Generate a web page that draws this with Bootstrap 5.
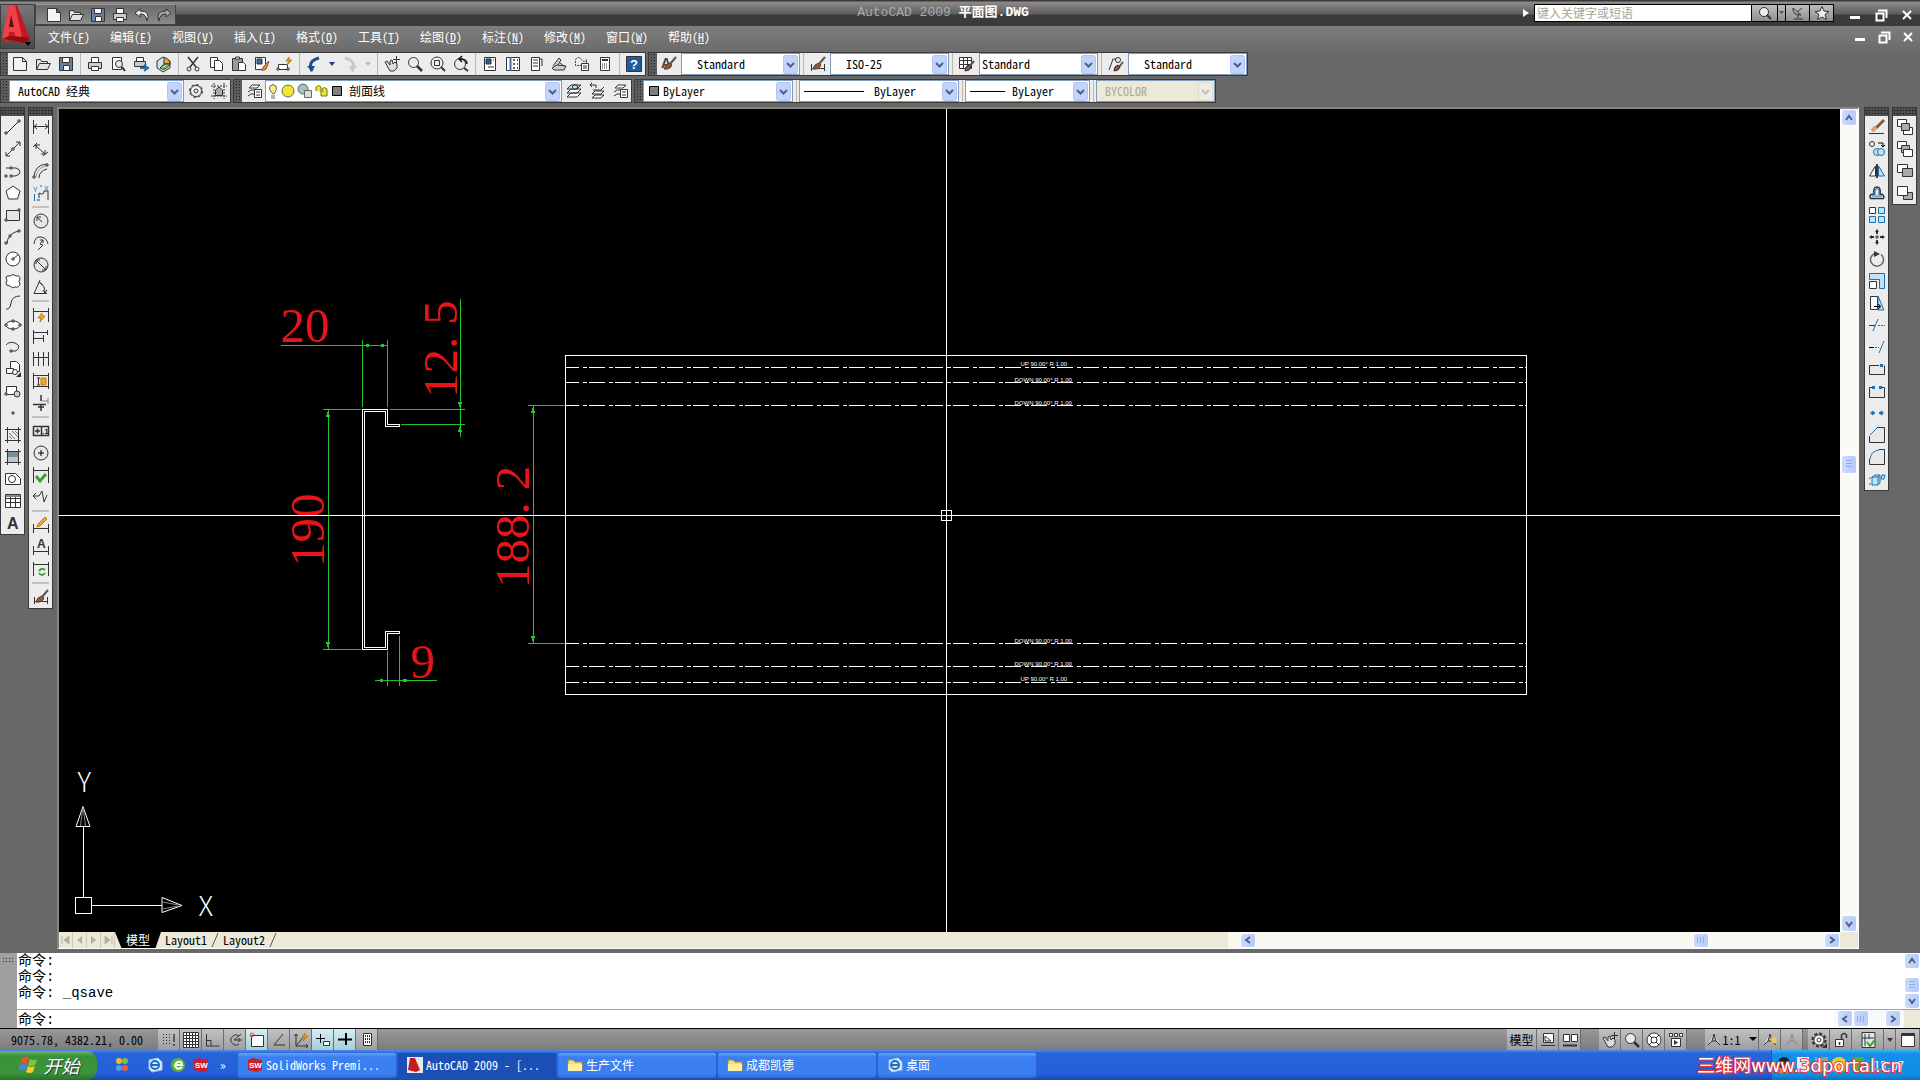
<!DOCTYPE html>
<html lang="zh-CN">
<head>
<meta charset="utf-8">
<meta name="viewport" content="width=device-width, initial-scale=1">
<title>AutoCAD 2009 平面图.DWG</title>
<link href="https://cdn.jsdelivr.net/npm/bootstrap@5.3.0/dist/css/bootstrap.min.css" rel="stylesheet">
<style>
body{background:#686868;color:#000;font:12px/16px "Noto Sans CJK SC","Noto Sans",sans-serif;font-feature-settings:"hwid";min-height:100vh;overflow:hidden}
button,select,input{font:inherit;font-feature-settings:inherit;color:inherit;border:0;background:none;padding:0;margin:0;border-radius:0}
svg{display:block;flex:none}
.ico{width:16px;height:16px;fill:none;stroke:#333;overflow:visible}
a{color:inherit;text-decoration:none}
.head{position:relative}
.titlebar{height:26px;background:linear-gradient(#3c3838 0,#3c3838 1px,#8d8a8a 2px,#5e5e5e 14px,#3b3b3b 15px,#3b3b3b 100%)}
.logo{left:0;top:4px;width:35px;height:45px;background:linear-gradient(#777,#4a4a4a);border:1px solid #3e3e3e;z-index:2}
.quick{margin-left:35px;height:21px;margin-top:4px;padding-left:7px;border:1px solid #444;border-top-color:#999;background:linear-gradient(#6b6b6b,#8b8b8b)}
.quick button,.tool{height:22px;display:flex;align-items:center;justify-content:center}
.quick button{width:22px;height:19px}
.doc{font:13px/18px "Liberation Mono","Noto Sans CJK SC",monospace;color:#aaa;padding-left:188px}
.doc b{color:#fff}
.seek{height:18px;border:1px solid #000;background:#000;gap:1px;margin-top:4px}
.seek input{width:216px;background:#fff;padding-left:2px;font-size:12px}
.seek input::placeholder{color:#a9a595;opacity:1}
.seek button{background:linear-gradient(#bdbdbd,#8f8f8f);display:flex;align-items:center;justify-content:center}
.winbtn{width:26px;height:22px;display:flex;align-items:center;justify-content:center}
.menubar .winbtn{width:24px}
.menubar{height:26px;background:linear-gradient(#7e7e7e,#6a6a6a);color:#fff}
.menubar a{width:62px;padding-top:3px}
.bars{padding-bottom:1px}
.bar{height:24px;border:1px solid #3a3a3a;background:#ececec;display:flex;align-items:center}
.bar+.bar{margin-left:2px}
.grip{width:8px;align-self:stretch;background:#5c5c5c radial-gradient(circle,#222 1px,transparent 1px) 1px 0/3px 3px}
.bar .tool{width:23px}
.bar .drop{width:13px}
.split{width:6px;align-self:stretch;display:flex;justify-content:center}
.split::before{content:"";width:1px;background:#bdb9ab}
.combo{height:22px;background:#fff;border:1px solid #7f9db9;display:flex;align-items:center;gap:1px}
.combo select{flex:1;min-width:0;height:20px;appearance:none;background:url("data:image/svg+xml,%3Csvg xmlns='http://www.w3.org/2000/svg' width='16' height='19'%3E%3Crect x='.5' y='.5' width='14' height='18' rx='2' fill='%23c3d3fc' stroke='%23b0c4f5'/%3E%3Cpath d='M4 8l3.500 3.500L11 8' fill='none' stroke='%234d6185' stroke-width='2'/%3E%3C/svg%3E") right 0 center no-repeat}
.combo.off{background:#ece9d8;color:#aca899}
.combo.off select{opacity:1;color:#aca899;background-image:url("data:image/svg+xml,%3Csvg xmlns='http://www.w3.org/2000/svg' width='16' height='19'%3E%3Crect x='.5' y='.5' width='14' height='18' rx='2' fill='%23efede2' stroke='%23dedbca'/%3E%3Cpath d='M4 8l3.500 3.500L11 8' fill='none' stroke='%23c5c1b0' stroke-width='2'/%3E%3C/svg%3E")}
.sty{width:119px}
.palette{width:25px;background:#ececec;border:1px solid #3a3a3a;margin-top:3px}
.palette .tool{width:23px}
.phead{height:8px;background:#4c4c4c radial-gradient(circle,#111 1px,transparent 1px) 3px 1px/3px 3px}
.psplit{height:6px;padding-top:2px}
.psplit::before{content:"";display:block;height:2px;margin:0 3px;background:#c2c2c2}
.board{border:2px solid #88857a;border-right-color:#fff;border-bottom-color:#fff;border-width:2px 1px 1px 2px;margin:3px 0 4px 4px}
.field{background:#000}
.field svg{width:100%;height:100%;position:absolute;inset:0}
.vs{width:18px;background:#fbfaf5}
.hs{height:16px;background:#f8f7f0;width:34%}
.sb{width:16px;height:17px;border:1px solid #fff;border-radius:3px;background:linear-gradient(90deg,#cbdafd,#b7cbf8);display:flex;align-items:center;justify-content:center;flex:none}
.tabs{height:16px;background:#ece9d8}
.tabs>button.pg{width:14px;height:16px;border-right:1px solid #cdc9b8;display:flex;align-items:center;justify-content:center}
.mtab{width:46px;background:#000;color:#fff;text-align:center;clip-path:polygon(0 0,100% 0,88% 100%,14% 100%)}
.ltab{width:58px;padding-left:4px;display:flex;justify-content:space-between}
.cmd{font:14px/16px "Liberation Mono","Noto Sans CJK SC",monospace;background:#fff}
.cgrip{width:17px;background:#9f9f9f;padding:4px 2px}
.cgrip i{display:block;height:5px;background:radial-gradient(circle,#222 1px,transparent 1px) 0 0/3px 3px}
.log{height:56px;overflow:hidden;padding-left:1px}
.ask{height:19px;border-top:1px solid #a5a293}
.ask label{padding:2px 0 0 1px}
.status{height:22px;border-top:1px solid #000;background:linear-gradient(#989898,#7c7c7c)}
.status .tool{width:22px;height:21px;background:linear-gradient(#c2c2c2,#9d9d9d);border-right:1px solid #6d6d6d}
.status .tool.on{background:linear-gradient(#d9edf3,#a4cdda)}
.task{height:30px;background:linear-gradient(#4b8ee8 0,#2a64d8 3px,#245edb 24px,#1c49ad 30px);color:#fff}
.start{width:97px;height:29px;border-radius:0 10px 10px 0;background:linear-gradient(#6cb665,#3c9038 5px,#3a963a 22px,#2b6f2a);font:italic 18px/24px "Noto Sans CJK SC",sans-serif;text-shadow:1px 1px 1px #234}
.tk{width:158px;height:25px;border-radius:2px;background:linear-gradient(#6aa2f8,#3b7ff2 4px,#3a7ff0 21px,#2f6bd8);display:flex;align-items:center;gap:3px;padding:0 9px}
.tk.on{background:#1c4fb5}
.ql{width:23px;display:flex;justify-content:center}
.tray{width:149px;background:linear-gradient(#38b4f5,#1290e8 4px,#108de5 25px,#0c70c0);border-left:1px solid #0f5fb5}
.mark3d{right:18px;top:5px;font:18px/22px "DejaVu Sans","Noto Sans CJK SC",sans-serif;color:#fff;white-space:nowrap;-webkit-text-stroke:2px #e2343a;paint-order:stroke fill}
</style>
</head>
<body class="d-flex flex-column">
<header class="head">
  <button class="logo position-absolute" aria-label="AutoCAD"><svg width="33" height="43" viewBox="0 0 33 43"><path d="M8 0H16L29 34 23 38 2 36Z" fill="#c31a22"/><path d="M8 0H14L22 37 16 36 13 27H8L7 36 1 34Z" fill="#ee4148"/><path d="M10 10L13 22H8Z" fill="#5d1417"/><path d="M1 34L16 36 23 38 29 34 24 32 8 31Z" fill="#8b0e14"/><path d="M24 37h6l-3 4z" fill="#000"/></svg></button>
  <div class="titlebar d-flex align-items-start">
    <div class="quick d-flex" id="quick"></div>
    <div class="doc flex-grow-1 text-center pt-1">AutoCAD 2009 <b>平面图.DWG</b></div>
    <svg class="mt-2" width="12" height="10"><path d="M1 1l6 4-6 4z" fill="#fff"/></svg>
    <div class="seek d-flex"><input type="text" aria-label="搜索" placeholder="键入关键字或短语"><button style="width:25px" aria-label="搜索"><svg class="ico"><circle cx="7" cy="7" r="4.500" fill="#eee"/><path d="M10 10l4 4" stroke-width="2"/></svg></button><button style="width:7px" aria-label="更多"><svg width="5" height="4"><path d="M0 0h5L2.500 3z" fill="#555"/></svg></button><button style="width:23px" aria-label="通讯中心"><svg class="ico"><path d="M3 3Q2 10 11 10ZM7 7l5-4M8 10v3M4 14h9"/></svg></button><button style="width:23px" aria-label="收藏夹"><svg class="ico"><path d="M8 1.500l2 4.500 5 .5-4 3 1.500 5L8 12l-4.500 2.500L5 9.500l-4-3 5-.5z" fill="#eee"/></svg></button></div>
    <div class="d-flex ps-2 pt-1 pe-0 wins"></div>
  </div>
  <div class="menubar d-flex">
    <nav class="d-flex flex-grow-1 ps-5" id="menu"></nav>
    <div class="d-flex wins"></div>
  </div>
</header>

<div class="bars d-flex flex-column gap-1" id="bars">
  <div class="d-flex">
    <div class="bar" style="width:646px"><span class="grip"></span><div class="d-flex" data-set="std"></div></div>
    <div class="bar" id="styles"><span class="grip"></span></div>
  </div>
  <div class="d-flex" style="margin-top:-1px">
    <div class="bar"><span class="grip"></span><div class="combo" style="width:175px"><select class="ps-2" aria-label="工作空间"><option>AutoCAD 经典</option></select></div><div class="d-flex" data-set="ws"></div></div>
    <div class="bar"><span class="grip"></span><div class="d-flex" data-set="lay1"></div>
      <div class="combo" style="width:297px"><svg width="82" height="18" fill="none" stroke="#666"><path d="M7 12Q2 7 4 4q3-3 6 0 2 3-2 8z" fill="#ffe97c"/><path d="M5 14h4M5 16h4"/><circle cx="22" cy="9" r="6" fill="#f0e62c"/><circle cx="37" cy="7" r="5" fill="#9ec5c0"/><path d="M38.500 8.500h7v7h-7z" fill="#ddd"/><path d="M50 9V5q3-3 5 0v9h6V7q-3-3-5 0v3" stroke="#77771a" fill="#e8e33c"/><path d="M66.500 4.500h9v9h-9z" fill="#808080" stroke="#000"/></svg><select aria-label="图层"><option>剖面线</option></select></div>
      <div class="d-flex" data-set="lay2"></div></div>
    <div class="bar"><span class="grip"></span>
      <div class="combo" style="width:150px"><svg width="18" height="14"><path d="M5.500 2.500h9v9h-9z" fill="#808080" stroke="#000"/></svg><select aria-label="颜色"><option>ByLayer</option></select></div><span class="split"></span>
      <div class="combo" style="width:160px"><svg width="73" height="3"><path d="M4 1.500h60" stroke="#000"/></svg><select aria-label="线型"><option>ByLayer</option></select></div><span class="split"></span>
      <div class="combo" style="width:125px"><svg width="45" height="3"><path d="M4 1.500h35" stroke="#000"/></svg><select aria-label="线宽"><option>ByLayer</option></select></div><span class="split"></span>
      <div class="combo off" style="width:119px"><select class="ps-2" aria-label="打印样式" disabled><option>BYCOLOR</option></select></div></div>
  </div>
</div>

<main class="d-flex flex-grow-1 align-items-stretch">
  <div class="d-flex align-items-start" style="gap:3px"><div class="palette"><div class="phead"></div><div data-set="draw"></div></div><div class="palette"><div class="phead"></div><div data-set="dim"></div></div></div>
  <section class="board d-flex flex-column flex-grow-1">
    <div class="d-flex flex-grow-1">
      <div class="field flex-grow-1 position-relative">
<svg viewBox="59 109 1782 823" preserveAspectRatio="xMidYMid slice" fill="none" stroke="#fff" shape-rendering="crispEdges">
<g stroke="#22c52b">
<path d="M281 345.500H388M362.500 340V407M387.500 340V407M460.500 299V437M390 409.500H465M401 424.500H465M328.500 409V650M323 409.500H361M323 649.500H361M533.500 405V644M528 405.500H565M528 643.500H565M375 680.500H437M387.500 651V686M399.500 636V686"/>
<path fill="#22c52b" stroke="none" d="M363 345.500l6-2v4zM387 345.500l-6-2v4zM460.500 409l-2-7h4zM460.500 425l-2 7h4zM328.500 410l-2 7h4zM328.500 649l-2-7h4zM533.500 406l-2 7h4zM533.500 643l-2-7h4zM387 680.500l-7-2v4zM400 680.500l7-2v4z"/>
</g>
<g fill="#e8141a" stroke="none" font-family="'Liberation Serif',serif" font-size="49">
<text x="281" y="342">20</text><text x="411" y="678">9</text>
<text transform="translate(457 398) rotate(-90)">12.<tspan dx="12">5</tspan></text>
<text transform="translate(324 567) rotate(-90)">190</text>
<text transform="translate(529 588) rotate(-90)">188.<tspan dx="12">2</tspan></text>
</g>
<path d="M362.500 409.500H387.500V424.500H399.500V426.500H385.500V411.500H364.500V647.500H385.500V631.500H399.500V633.500H387.500V649.500H362.500Z"/>
<path d="M565.500 355.500H1526.500V694.500H565.500Z"/>
<path stroke-dasharray="16 4 4 2" stroke-dashoffset="3" d="M566 367.500H1526M566 382.500H1526M566 405.500H1526M566 643.500H1526M566 666.500H1526M566 682.500H1526"/>
<g fill="#fff" stroke="none" font-family="'Liberation Sans',sans-serif" font-size="6">
<text x="1021" y="366">UP  90.00°  R 1.00</text><text x="1015" y="382">DOWN 90.00° R 1.00</text><text x="1015" y="405">DOWN 90.00° R 1.00</text>
<text x="1015" y="643">DOWN 90.00° R 1.00</text><text x="1015" y="666">DOWN 90.00° R 1.00</text><text x="1021" y="681">UP  90.00°  R 1.00</text></g>
<path d="M946.500 109V932M59 515.500H1841M941.500 510.500h10v10h-10zM75.500 897.500h16v16h-16zM92 905.500H162M83.500 826V897"/>
<path shape-rendering="auto" d="M162.500 897.500V912.500L182.500 905.500ZM76.500 826.500H90.500L83.500 806.500Z"/><path stroke="#888" shape-rendering="auto" d="M163 902l16 3M163 909l16-3M81 826l2-16M86 826l-2-16"/>
<g fill="#fff" stroke="none" font-family="'Noto Sans CJK SC',sans-serif" font-weight="300" font-size="27" style="font-feature-settings:normal"><text x="78" y="792">Y</text><text x="199" y="916">X</text></g>
</svg></div>
      <div class="vs d-flex flex-column align-items-center justify-content-between" data-v></div>
    </div>
    <div class="tabs d-flex">
      <button class="pg" aria-label="首页"><svg width="10" height="10"><path d="M1 1v8M8 1L3 5l5 4z" fill="#b5b19f" stroke="#b5b19f"/></svg></button><button class="pg" aria-label="上一页"><svg width="8" height="10"><path d="M6 1L1 5l5 4z" fill="#b5b19f"/></svg></button><button class="pg" aria-label="下一页"><svg width="8" height="10"><path d="M1 1l5 4-5 4z" fill="#b5b19f"/></svg></button><button class="pg" aria-label="末页"><svg width="10" height="10"><path d="M9 1v8M2 1l5 4-5 4z" fill="#b5b19f" stroke="#b5b19f"/></svg></button>
      <button class="mtab">模型</button><button class="ltab">Layout1<svg width="8" height="16"><path d="M1 15L7 1" stroke="#555"/></svg></button><button class="ltab">Layout2<svg width="8" height="16"><path d="M1 15L7 1" stroke="#555"/></svg></button>
      <span class="flex-grow-1"></span>
      <div class="hs d-flex align-items-center ps-2" id="hs"></div><span style="width:18px"></span>
    </div>
  </section>
  <div class="d-flex align-items-start" style="gap:3px;padding:0 3px 0 5px"><div class="palette"><div class="phead"></div><div data-set="mod"></div></div><div class="palette"><div class="phead"></div><div data-set="ord"></div></div></div>
</main>

<section class="cmd d-flex">
  <div class="cgrip"><i></i></div>
  <div class="flex-grow-1">
    <div class="d-flex"><div class="log flex-grow-1"><div>命令:</div><div>命令:</div><div>命令: _qsave</div></div><div class="d-flex flex-column justify-content-between bg-white" id="cv"></div></div>
    <div class="ask d-flex"><label for="ask">命令:</label><input id="ask" class="flex-grow-1" type="text"><div class="d-flex bg-light" style="width:70px;padding:0 3px" id="ch"></div><span style="width:16px;background:#ece9d8"></span></div>
  </div>
</section>

<footer>
  <div class="status d-flex align-items-center"><span style="width:158px;padding-left:11px">9075.78, 4382.21, 0.00</span><div class="d-flex" data-set="snap"></div><span class="flex-grow-1"></span>
    <button class="tool" style="width:30px">模型</button><div class="d-flex" data-set="st1"></div><div class="d-flex" style="margin-left:18px" data-set="st2"></div>
    <button class="tool" style="width:54px;margin-left:18px" aria-label="注释比例"><svg class="ico"><path d="M8 2L6 9 2 13M8 2l2 7 4 4M6 9h4" fill="#eee"/></svg>1:1<svg class="ms-2" width="8" height="5"><path d="M0 0h8L4 4z"/></svg></button><div class="d-flex" data-set="st3"></div><div class="d-flex" style="margin-left:5px" data-set="st4"></div></div>
  <div class="task d-flex align-items-center position-relative">
    <button class="start d-flex align-items-center justify-content-center gap-1 me-1"><svg width="22" height="22"><path d="M4 4q4-3 7 0l-2 6q-3-2-7 0z" fill="#e8552d"/><path d="M12 5q4 2 7 0l-2 6q-3 2-7 0z" fill="#86c440"/><path d="M2 11q4-2 7 0l-2 6q-3-3-7 0z" fill="#4a84e8"/><path d="M10 12q4 2 7 0l-2 6q-3 2-7 0z" fill="#fbca2c"/></svg>开始</button>
    <div class="d-flex align-items-center" style="width:137px" id="ql"></div>
    <div class="d-flex flex-grow-1" style="gap:2px" id="tasks"></div>
    <div class="tray align-self-stretch d-flex align-items-center justify-content-end pe-3" id="tray"></div>
    <span class="mark3d position-absolute">三维网www.3dportal.cn</span>
  </div>
</footer>
<script src="https://cdn.jsdelivr.net/npm/bootstrap@5.3.0/dist/js/bootstrap.bundle.min.js"></script>
<script>
const p=(d,a='')=>`<path d="${d}" ${a}/>`, c=(x,y,r,a='')=>`<circle cx="${x}" cy="${y}" r="${r}" ${a}/>`;
const W='fill="#fff"',G='fill="#ccc"',B='stroke="#1f6fae"',BF='stroke="#1f6fae" fill="#bfe3f7"',O='fill="#f5a623" stroke="#c77a10"',K='fill="#333" stroke="none"';
const sq=(x,y)=>p(`M${x} ${y}h2v2h-2z`,W);
const brush=p('M15 1L9 8','stroke="#555" stroke-width="2"')+p('M9 7Q4 8 3 13 9 14 11 9z','fill="#8a5a3c" stroke="#6b4028"');
const I={
new:p('M1.500 1.500h9l4 4v9h-13zM10.500 1.500v4h4','fill="#f4f4f4"'),open:p('M1.500 13.500v-10h4l1 2h6v2M1.500 13.500l3-6h11l-3 6z','fill="#dde3ea"'),
save:p('M1.500 1.500h13v13h-13z','fill="#69809c"')+p('M4.500 1.500h7v5h-7zM5.500 9.500h6v5h-6z',W),
print:p('M4.500 6V1.500h7V6',W)+p('M1.500 6.500h13v6h-13z',G)+p('M4.500 10.500h7v4h-7z',W),
prev:p('M2.500 1.500h9v12h-9z',W)+c(9,8,3.5,'fill="#dceaf5"')+p('M12 11l3 4','stroke-width="2"'),
pub:p('M3.500 5V1.500h7V5',W)+p('M1.500 5.500h11v5h-11z',G)+p('M7 12h7M11 9l4 3-4 3','stroke="#1f6fae" stroke-width="2"'),
dwf:p('M1 5l6-4 7 4v7l-7 4-6-4z','fill="#cfe0ea"')+p('M8 8V1.500A6.500 6.500 0 0 1 14 8z','fill="#f0a23c"')+p('M8 8L4 12q5 4 10-4z','fill="#8fc36b"'),
cut:p('M3 1l8 10M13 1L5 11','stroke-width="1.500"')+c(4,13,2)+c(12,13,2),
copy:p('M2.500 1.500h7v10h-7z',W)+p('M6.500 4.500h5l3 3v7h-8z',W),
paste:p('M1.500 2.500h10v12h-10z','fill="#999"')+p('M4.500 1h4v2h-4z',W)+p('M7.500 6.500h5l2 2v6h-7z',W),
match:p('M1.500 1.500h10v12h-10z','fill="#fff"')+p('M3 3h5v5H3z','fill="#2c6bb5"')+p('M15 5l-5 5 -3 4q5 1 6-3z','fill="#e08a2c" stroke="#8a5a3c"'),
blk:p('M1.500 8.500h9v5h-9z',W)+sq(0,12)+sq(10,12)+p('M12 1l-3 4h3l-2 4 5-5h-3z',O),
undo:p('M6 15Q1 5 13 2','stroke="#1c4f8f" stroke-width="3"')+p('M1 10l8 0-3 6z','fill="#1c4f8f" stroke="none"'),
redo:p('M10 15Q15 5 3 2','stroke="#c8c8c8" stroke-width="3"')+p('M7 10l8 0-5 6z','fill="#c8c8c8" stroke="none"'),
drop:p('M5 6h6l-3 4z','fill="#1c3f8f" stroke="none"'),dropg:p('M5 6h6l-3 4z','fill="#bbb" stroke="none"'),
pan:p('M1 6l2-1 3 4V5l2-1 1 4 2-2 2 2v4l-3 3H6z','fill="#ddd"')+p('M12.500 0v7M9 3.500h7'),
zoom:c(6.5,6.5,5,'fill="#e3eef5"')+p('M10 10l5 5','stroke-width="2.500"'),
zwin:c(7,7,6,'fill="#e8f0f5"')+p('M4.500 4.500h5v5h-5z')+p('M11 11l4 4','stroke-width="2"'),
zprev:c(7,8,5.5,'fill="#e3eef5"')+p('M11 12l4 3','stroke-width="2"')+p('M14 8Q14 3 7 3M9 0L6 3l3 3','stroke="#111" stroke-width="1.500"'),
prop:p('M2.500 1.500h11v13h-11z',W)+p('M4 3h5v5H4z','fill="#2c5b9a"')+p('M6 11h6M11 4h1'),
dc:p('M1.500 1.500h13v13h-13z',W)+p('M5.500 1v14M8 4h2M12 4h1M8 8h2M12 8h1M8 12h2M12 12h1','stroke-width="2" stroke="#4a6d96"'),
tp:p('M3.500 1.500h8v13h-8z',W)+p('M5 4h5M5 7h5M5 10h5M12 3h2v7'),ss:p('M1 12l5-3 9 1-2 4H3zM2 10L8 2l2 2-3 5M9 7l4 3',G),
mk:p('M1.500 3.500q3-4 6 0t5 0v6h-11z','stroke-dasharray="2 1"')+p('M7.500 7.500h7v7h-7z',W)+p('M9 10h4M9 12h4'),
calc:p('M3.500 1.500h9v13h-9z',W)+p('M5 4h6','stroke-width="2"')+p('M5 8h6M5 10h6M5 12h6','stroke-dasharray="1 1"'),
help:p('M.5 .5h15v15H.5z','fill="#1e5c9c"')+'<text x="4" y="13" fill="#fff" stroke="none" font-family="Liberation Sans" font-weight="700" font-size="13">?</text>',
gear:c(8,8,6.5,'stroke-dasharray="3 2"')+c(8,8,5.5,'fill="#f2f2f2"')+c(8,8,2),
wsl:p('M3 0v16M13 0v16M0 3h16M0 13h16','stroke-dasharray="2 1"')+p('M4.500 12.500V7L8 4l3.500 3v5.500z','fill="#aaa"'),
layp:p('M3 5l3-3h8l-3 3zM2 9l3-2h5M2 13l3-2h3',W)+p('M8.500 6.500h7v8h-7z',W)+p('M10 9h4M10 12h4'),
lay:p('M1 14l4-4h10l-4 4zM1 10l4-4h10l-4 4z',W)+p('M1 6l4-4h10l-4 4z','fill="#bfe3f7"')+c(9,4,2.5),
layb:p('M3 15l3-3h9l-3 3zM3 11l3-3h9l-3 3z',W)+p('M4 7h8l3-3M1 2h6v3M3 0L1 2l2 2'),
tsty:'<text x="0" y="12" fill="#444" stroke="none" font-family="Liberation Sans" font-weight="700" font-size="14">A</text>'+brush,
dsty:p('M1.500 8v7M14.500 8v7M2 12.500h12')+brush,
tbsty:p('M.5 1.500h12v11H.5zM.5 4.500h12M.5 8.500h12M4.500 1.500v11M8.500 1.500v11',W)+p('M15 5l-5 6','stroke="#555" stroke-width="2"')+p('M10 9q-4 1-4 6 5 0 6-4z','fill="#8a5a3c"'),
msty:p('M1 14L5 3h3')+c(10,4,2.5)+p('M15 6l-4 5','stroke="#555" stroke-width="2"')+p('M10 9q-4 1-4 6 5 0 6-4z','fill="#8a5a3c"'),
line:p('M2 14L14 2')+sq(0,13)+sq(13,1),xline:p('M1 15L15 1M1 11v4h4M11 1h4v4')+sq(7,7),
pline:p('M1 5h10q4 1 4 4t-5 4H6')+sq(0,12)+sq(5,4)+sq(5,12),
poly:p('M8 1l7 5-2.500 8h-9L1 6z',W),rect:p('M1.500 3.500h13v10h-13z','fill="#e5e5e5"')+sq(0,12)+sq(13,2),
arc:p('M2 14Q3 4 14 2')+sq(0,13)+sq(13,1)+sq(4,6),circ:c(8,8,7,W)+sq(7,7)+p('M9 7l4-3'),
cloud:p('M5 3q3-3 6 0 4-1 4 3-2 2 0 5-1 4-5 3-3 2-5-1-4 0-4-3 2-3 0-5 0-3 4-2z',W),
spl:p('M1 14Q5 15 6 8T15 1'),ell:'<ellipse cx="8" cy="8" rx="7" ry="4" fill="#fff"/>'+sq(0,7)+sq(14,7)+sq(7,3)+sq(7,11),
ella:p('M1 6q3-4 9-2 7 3 1 8l-4 0')+sq(5,11),
ins:p('M5.500 .5h6l3 3v7h-9z',W)+p('M1.500 7.500h7v5h-7z',W)+c(10,11,2.5,W)+p('M16 16v-5l-5 5z',K),
mkb:p('M1.500 3.500h10v8h-10z',W)+c(12,11,3,G)+sq(0,10),pt:sq(7,7),
hat:p('M2.500 0v16M13.500 0v16M0 2.500h16M0 13.500h16')+p('M4 6l6 6M4 9l3 3M7 4l6 6M10 4l3 3','stroke="#777"'),
grad:p('M3 3h10v5H3z','fill="#7c8f99" stroke="none"')+p('M3 8h10v5H3z','fill="#bcc6cc" stroke="none"')+p('M2.500 0v16M13.500 0v16M0 2.500h16M0 13.500h16'),
reg:p('M.5 2.500h10l5 5v6H.5z',W)+c(7,8,3.5),tbl:p('M.5 1.500h15v13H.5zM.5 5.500h15M.5 9.500h15M5.500 1v13M10.500 1v13',W)+p('M1 3h14','stroke="#888" stroke-width="2"'),
A:'<text x="2" y="14" fill="#333" stroke="none" font-family="Liberation Sans" font-weight="700" font-size="16">A</text>',
d1:p('M.5 1v14M15.500 1v14M1 7.500h14M4 5L1 7.500 4 10M12 5l3 2.500-3 2.500'),d2:p('M2 4l10 9M0 6l4-4M10 15l5-4M3 8V4h4M12 9v4H8'),
d3:p('M1 15Q1 2 14 1M6 15q0-7 8-9')+p('M3 14Q4 5 13 3','stroke="#999"')+sq(0,13)+sq(13,1),
d4:p('M6 13V8q5 3 5-2h4v9M4 15h3')+'<text x="0" y="7" fill="#1f6fae" stroke="none" font-family="Liberation Sans" font-size="7">Y</text><text x="11" y="6" fill="#1f6fae" stroke="none" font-family="Liberation Sans" font-size="7">X</text>'+p('M1.500 9v7M7 1h2',B),
rad:c(8,8,7,'fill="#e5e5e5"')+p('M9 9L4 4M4 8V4h4'),jog:p('M1 9Q2 1 8 2t7 7M5 15l5-5-3-1 3-4M7 5h3v3'),dia:c(8,8,7,'fill="#e5e5e5"')+p('M3 3l10 10M3 7V3h4M13 9v4H9'),
ang:p('M14 14.500H1L7 1M6 3q6 3 6 11M9 6L6 3M10 11l2 3 2-3'),
qd:p('M.5 1v14M15.500 1v14M1 4.500h14')+p('M9 6l-4 5h3l-1 4 5-6H9z',O),bl:p('M.5 1v14M1 3.500h13M1 9.500h9M14.500 1v5M10.500 6v7'),
ct:p('M.5 1v14M5.500 1v14M10.500 1v14M15.500 1v14M1 6.500h14'),spc:p('M.5 0v16M15.500 0v16M1 2.500h14M1 13.500h14M4 5h3M5.500 5v7M4 12h3')+p('M8 5h5v7H8z',O),
brk:p('M8 0v6M8 9v7M0 9.500h13M5 12h6','stroke-width="1.500"')+p('M9 6h6M15 3v6','stroke="#888"'),
tol:p('M.5 3.500h15v9H.5zM8.500 3v9M2 8h5M4.500 5.500v5','stroke-width="1.500"')+'<text x="9" y="11" fill="#222" stroke="none" font-family="Liberation Sans" font-weight="700" font-size="8">.1</text>',
cm:c(8,8,7,'fill="#e8e8e8"')+p('M8 5v6M5 8h6','stroke="#000"'),insp:p('M.5 0v16M15.500 0v16M1 3.500h14')+p('M3 9l4 5 6-7','stroke="#3f9c35" stroke-width="3"'),
jl:p('M0 7h6l3-5 2 11 3-7M3 4L0 7l3 3'),ed:p('M.5 7v9M15.500 7v9M1 11.500h14')+p('M4 10l1-3 7-7 2 2-7 7z',O),
et:p('M.5 7v9M15.500 7v9M1 12.500h14')+'<text x="4" y="9" fill="#333" stroke="none" font-family="Liberation Sans" font-weight="700" font-size="12">A</text>',
up:p('M.5 1v14M15.500 1v14M1 3.500h14')+p('M6 10q3-4 6-1M12 12q-3 4-6 0','stroke="#3f9c35" stroke-width="2"'),
er:p('M0 14.500h15')+p('M15 1L7 9','stroke="#8a5a3c" stroke-width="3"')+p('M7 8L3 12','stroke="#e0a070" stroke-width="4"'),
cp:c(3,3,2.5)+c(8,11,3.5,BF)+c(12,11,3.5,BF)+p('M9 2h5v4M12 4l2 2 2-2','stroke="#000"'),
mir:p('M6.500 3v10H.5z',W)+p('M9.500 3v10h6z',BF)+p('M8 1v14','stroke="#000" stroke-width="1.500"'),
off:p('M1 13.500h14M1 13q-1-4 4-4-1-7 3-7t3 7q4 0 4 4','stroke-width="1.500" stroke="#234"')+p('M3 11h10M6 10V5q2-3 4 0v5',B),
arr:p('M.5 .5h6v6h-6z',W)+p('M9.500 .5h6v6h-6zM.5 9.500h6v6h-6zM9.500 9.500h6v6h-6z',BF),
mv:p('M8 1v4M8 11v4M1 8h4M11 8h4','stroke-width="2"')+p('M6 3l2-3 2 3zM6 13l2 3 2-3zM3 6L0 8l3 2zM13 6l3 2-3 2z',K)+sq(7,7),
rot:p('M6 2.500A6.500 6.500 0 1 0 12 3.500','stroke="#666" stroke-width="1.500"')+p('M5 0l6 3-6 3z',K),sc:p('M.5 .5h15v15h-5v-9H.5z',BF)+p('M.5 8.500h7v7h-7z',W),
str:p('M1.500 1.500h7v13h-7z',W)+p('M9 1l6 14H9z',BF)+p('M5 11.500h6M9 9l3 2.500L9 14','stroke="#000"'),tr:p('M0 8.500h6')+p('M4 14L9 2',B)+p('M9 8.500h7',B+' stroke-dasharray="2 1"'),
ex:p('M0 8.500h5','stroke="#000"')+p('M6 8.500h4',B+' stroke-dasharray="2 1"')+p('M10 14l5-12',B),bp:p('M10 4.500H.5v9h15v-9','fill="#e8e8e8"')+p('M11 3h3v3h-3z','fill="#1f6fae" stroke="none"'),
bk:p('M3 4.500H.5v10h15v-10H13','fill="#e8e8e8"')+p('M3 3h3v3H3zM10 3h3v3h-3z','fill="#1f6fae" stroke="none"'),jn:p('M1 8h5M10 8h5M3 6l3 2-3 2zM13 6l-3 2 3 2z','stroke="#1f6fae" fill="#1f6fae"'),
ch:p('M8 .5h7.500v15H.500V9','fill="#e8e8e8"')+p('M1 8L8 1',B),fl:p('M10 .5h5.500v15H.500V10','fill="#e8e8e8"')+p('M1 10Q2 2 10 1',B),
exp:p('M3 6l3-2h5v8l-2 2H3zM3 6h6v8M9 6l2-2M0 8l2-2M12 8h3l1-4h-3zM0 13h2',BF),
o1:p('M.5 .5h9v7h-9zM6.500 8.500h9v7h-9z',W)+p('M4.500 4.500h8v7h-8z','fill="#aaa"'),o2:p('M.5 .5h9v7h-9z',W)+p('M4.500 4.500h8v7h-8z','fill="#aaa"')+p('M6.500 8.500h9v7h-9z',W),
o3:p('M.5 1.500h10v8h-10z',W)+p('M5.500 5.500h10v8h-10z','fill="#aaa"'),o4:p('M6.500 7.500h9v7h-9z','fill="#aaa"')+p('M.5 1.500h10v9h-10z',W),
s1:p('M2 2.500h9M2 5.500h9M2 8.500h9M2 11.500h9','stroke-dasharray="1 2"')+p('M13 2v8M13 12v2','stroke="#000"'),
s2:p('M.5 .5h15v15H.500zM3.500 0v16M6.500 0v16M9.500 0v16M12.500 0v16M0 3.500h16M0 6.500h16M0 9.500h16M0 12.500h16',W),s3:p('M1.500 2v12h13M1 8.500h5v5'),
s4:p('M12 4A5 5 0 1 0 12 12M7 8l7-6M7 8h8M12 6v4'),s5:p('M2.500 3.500h12v11h-12z',W)+c(3,3,2,'stroke="#e05030"'),s6:p('M12 2L3 13h11'),
s7:p('M3 2v12h12M3 14L12 3M1 4l2-2 2 2M13 12l2 2-2 2')+p('M12 1l-3 4h3l-2 4 5-5h-3z',O),s8:p('M1 6.500h9M5.500 2v9','stroke="#000"')+p('M8.500 9.500h6v4h-6z',W),
s9:p('M1 7.500h14M9 1v12','stroke="#000" stroke-width="2"'),s10:p('M4.500 1.500h8v12h-8z',W)+p('M6 4h5M6 7h5M6 10h5','stroke-dasharray="1 1" stroke-width="2"'),
t1:p('M3.500 1.500h10v9h-10z',W)+p('M5 4l6 5H5zM1 13.500h14'),t2:p('M1.500 2.500h6v7h-6zM9.500 2.500h6v7h-6z',W)+p('M1 13.500h14','stroke-width="2"'),
wh:c(8,8,7,W)+c(8,8,3)+p('M3 3l3 3M13 3l-3 3M3 13l3-3M13 13l-3-3'),mo:p('M1.500 1.500h3v3h-3zM6.500 1.500h3v3h-3zM11.500 1.500h3v3h-3z',W)+p('M3.500 6.500h9v8h-9z',W)+p('M6 8l4 2.500L6 13z',K),
an:p('M8 2L6 9 2 13M8 2l2 7 4 4M6 9h4',W)+c(12,8,3,'fill="#f8c555" stroke="none"'),an2:p('M8 2L6 9 2 13M8 2l2 7 4 4M6 9h4','stroke="#888"'),
sg:c(8,8,6.5,'stroke-width="2" stroke-dasharray="3 2"')+c(8,8,5,W)+c(8,8,2)+p('M16 16v-5l-5 5z',K),
lk:p('M2.500 7.500h8v7h-8z',W)+p('M8.500 7V3q3-3 5 0v3M6.500 10v3','stroke-width="1.500"'),cad:p('M2 .5h13v15H2z','fill="#dce6ea"')+p('M5 2v12M2 6h12M9 2v5')+p('M7 10l3 4 5-6','stroke="#4b9c35" stroke-width="2"'),
ar:p('M5 6h6l-3 4z',K),cl:p('M1.500 1.500h13v13h-13z',W)+p('M1 3h14','stroke-width="2"'),und2:p('M6 2L1 6l5 4V7q6-1 7 7 4-10-7-10z','fill="#eee"'),red2:p('M10 2l5 4-5 4V7q-6-1-7 7Q-1 4 10 4z','fill="#aaa"')
};
const S=n=>`<svg class="ico" viewBox="0 0 16 16">${I[n]}</svg>`;
const T={std:'new open save | print prev pub dwf | cut copy paste match blk | undo drop redo dropg | pan zoom zwin zprev | prop dc tp ss mk calc | help',
ws:'gear wsl',lay1:'layp',lay2:'lay layb layp',
draw:'line xline pline poly rect arc circ cloud spl ell ella ins mkb pt hat grad reg tbl A',
dim:'d1 d2 d3 d4 | rad jog dia ang | qd bl ct spc brk | tol cm insp jl | ed et up | dsty',
mod:'er cp mir off arr mv rot sc str tr ex bp bk jn ch fl exp',ord:'o1 o2 o3 o4',
snap:'s1 s2 s3 s4 s5 s6 s7 s8 s9 s10',st1:'t1 t2',st2:'pan zoom wh mo',st3:'an an2',st4:'sg lk cad ar cl'};
document.querySelectorAll('[data-set]').forEach(e=>{const k=e.dataset.set,v=['draw','dim','mod','ord'].includes(k);
 e.innerHTML=T[k].split(' ').map(n=>n=='|'?`<span class="${v?'psplit d-block':'split'}"></span>`:`<button class="tool${/^drop/.test(n)?' drop':''}${['s5','s8','s9'].includes(n)?' on':''}" aria-label="${n}"${n=='cad'?' style="width:32px"':n=='ar'?' style="width:12px"':n=='cl'?' style="width:24px"':''}>${S(n)}</button>`).join('')});
quick.innerHTML='new open save print und2 red2'.split(' ').map(n=>`<button aria-label="${n}">${S(n)}</button>`).join('');
menu.innerHTML=['文件(F)','编辑(E)','视图(V)','插入(I)','格式(O)','工具(T)','绘图(D)','标注(N)','修改(M)','窗口(W)','帮助(H)'].map(t=>`<a href="#">${t.replace(/\((.)\)/,'(<u>$1</u>)')}</a>`).join('');
document.querySelectorAll('.wins').forEach(e=>e.innerHTML=['M3 9h10v3H3z','M3.500 6.500h7v7h-7zM5 3.500h8.500V11','M4 4l8 8M12 4l-8 8'].map((d,i)=>`<button class="winbtn" aria-label="win${i}"><svg class="ico">${p(d,`stroke="#fff" stroke-width="${i?2:0}" fill="${i?'none':'#fff'}"`)}</svg></button>`).join(''));
document.getElementById('styles').insertAdjacentHTML('beforeend',[['tsty','Standard',15],['dsty','ISO-25',15],['tbsty','Standard',2],['msty','Standard',15]].map((a,i)=>`${i?'<span class="split"></span>':''}<button class="tool" style="width:24px" aria-label="${a[0]}">${S(a[0])}</button><div class="combo sty"><select aria-label="${a[0]}" style="padding-left:${a[2]}px"><option>${a[1]}</option></select></div>`).join(''));
const ar={u:'M2 7l3-4 3 4',d:'M2 3l3 4 3-4',l:'M7 2L3 5l4 3',r:'M3 2l4 3-4 3'};
const sb=(k,s='')=>`<button class="sb" aria-label="scroll ${k}" style="${s}"><svg width="10" height="10" fill="none">${ar[k]?p(ar[k],'stroke="#4d6185" stroke-width="2"'):p(k=='h'?'M1.500 2v6M4.500 2v6M7.500 2v6':'M2 1.500h6M2 4.500h6M2 7.500h6','stroke="#8fabf0"')}</svg></button>`;
document.querySelector('[data-v]').innerHTML=sb('u')+'<span style="flex:330"></span>'+sb('v','height:19px')+'<span style="flex:443"></span>'+sb('d');
hs.innerHTML='<span style="width:4px"></span>'+sb('l','height:15px')+'<span style="flex:437"></span>'+sb('h','height:15px')+'<span style="flex:115"></span>'+sb('r','height:15px');
cv.innerHTML=sb('u','height:16px')+'<span class="flex-grow-1"></span>'+sb('v','height:16px')+sb('d','height:16px');
ch.innerHTML=sb('l')+sb('h')+'<span class="flex-grow-1"></span>'+sb('r');
const sw='<svg width="16" height="16">'+p('M1 3l5-2 9 2v10l-5 2-9-2z','fill="#c8202a"')+'<text x="2" y="11" font-family="Liberation Sans" font-weight="700" font-size="8" fill="#fff">SW</text></svg>',
fo='<svg width="16" height="16">'+p('M1 3h5l2 2h7v9H1z','fill="#f9dc76" stroke="#b98a1f"')+p('M1 7h14v7H1z','fill="#fdeea0"')+'</svg>',
ie='<svg width="16" height="16">'+p('M2 3l9-2 4 4v8l-10 2-3-3z','fill="#d9ecfb" stroke="#9cc4e8"')+c(8,8,4,'fill="none" stroke="#1b6fc4" stroke-width="2"')+p('M5 8h6','stroke="#1b6fc4" stroke-width="2"')+'</svg>',
ac='<svg width="16" height="16">'+p('M0 0h16v16H0z','fill="#e8e8e8"')+p('M3 1h5l5 12-4 2-8-2z','fill="#c21b22"')+'</svg>';
ql.innerHTML='<button class="d-flex justify-content-center" aria-label="360" style="width:42px"><svg width="16" height="16">'+c(5,4,3,'fill="#f5b62c"')+c(11,4,3,'fill="#7cc142"')+c(5,11,3,'fill="#4aa0f0"')+c(11,11,3,'fill="#e8603c"')+'</svg></button>'+[ie,'<svg width="16" height="16">'+c(8,8,7,'fill="#5cb531"')+p('M12 10Q8 14 5 9q1-5 6-4l1 3H5','fill="none" stroke="#fff" stroke-width="2"')+'</svg>',sw].map((s,i)=>`<button class="ql" aria-label="ql${i}">${s}</button>`).join('')+'<span class="ps-2 align-self-start">»</span>';
tasks.innerHTML=[[sw,'SolidWorks Premi...'],[ac,'AutoCAD 2009 - [...'],[fo,'生产文件'],[fo,'成都凯德'],[ie,'桌面']].map((a,i)=>`<button class="tk${i==1?' on':''}">${a[0]}<span>${a[1]}</span></button>`).join('');
tray.innerHTML='<svg width="100" height="22">'+c(14,9,6,'fill="#222"')+p('M10 14h8v5h-8z','fill="#f08a2c"')+p('M27 3h12v15H27z','fill="#e8eef5"')+p('M45 3h13v14H45z','fill="#999"')+c(69,11,8,'fill="#f0c62c"')+p('M82 3h12v15H82z','fill="#58a83c"')+'</svg><span class="ms-1">15:07</span>';
</script>
</body>
</html>
